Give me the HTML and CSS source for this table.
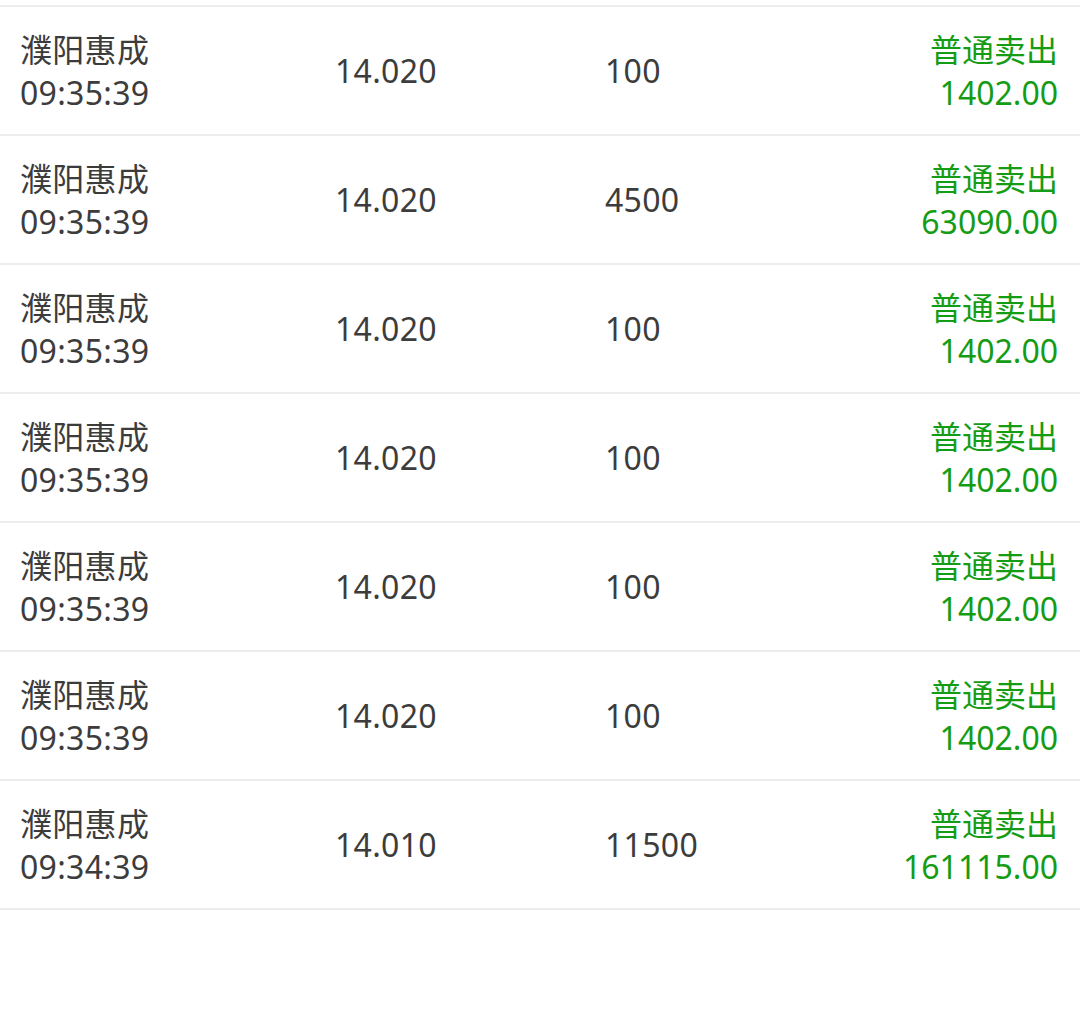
FILE: index.html
```html
<!DOCTYPE html>
<html lang="zh-CN">
<head>
<meta charset="utf-8">
<link rel="stylesheet" href="styles.css">
</head>
<body>
<div class="list">
  <div class="row">
    <div class="cell name"><div>濮阳惠成</div><div>09:35:39</div></div>
    <div class="cell">14.020</div>
    <div class="cell">100</div>
    <div class="cell side"><div>普通卖出</div><div>1402.00</div></div>
  </div>
  <div class="row">
    <div class="cell name"><div>濮阳惠成</div><div>09:35:39</div></div>
    <div class="cell">14.020</div>
    <div class="cell">4500</div>
    <div class="cell side"><div>普通卖出</div><div>63090.00</div></div>
  </div>
  <div class="row">
    <div class="cell name"><div>濮阳惠成</div><div>09:35:39</div></div>
    <div class="cell">14.020</div>
    <div class="cell">100</div>
    <div class="cell side"><div>普通卖出</div><div>1402.00</div></div>
  </div>
  <div class="row">
    <div class="cell name"><div>濮阳惠成</div><div>09:35:39</div></div>
    <div class="cell">14.020</div>
    <div class="cell">100</div>
    <div class="cell side"><div>普通卖出</div><div>1402.00</div></div>
  </div>
  <div class="row">
    <div class="cell name"><div>濮阳惠成</div><div>09:35:39</div></div>
    <div class="cell">14.020</div>
    <div class="cell">100</div>
    <div class="cell side"><div>普通卖出</div><div>1402.00</div></div>
  </div>
  <div class="row">
    <div class="cell name"><div>濮阳惠成</div><div>09:35:39</div></div>
    <div class="cell">14.020</div>
    <div class="cell">100</div>
    <div class="cell side"><div>普通卖出</div><div>1402.00</div></div>
  </div>
  <div class="row last">
    <div class="cell name"><div>濮阳惠成</div><div>09:34:39</div></div>
    <div class="cell">14.010</div>
    <div class="cell">11500</div>
    <div class="cell side"><div>普通卖出</div><div>161115.00</div></div>
  </div>
</div>
</body>
</html>
```
FILE: styles.css
```css
html, body {
  margin: 0;
  padding: 0;
  background: #ffffff;
}
body {
  width: 1080px;
  height: 1028px;
  overflow: hidden;
  font-family: "Noto Sans", "Noto Sans CJK SC", sans-serif;
  font-size: 32px;
  color: #3c3c3c;
}
.list {
  padding-top: 5px;
}
.row {
  height: 127px;
  border-top: 2px solid #ededed;
  display: grid;
  grid-template-columns: 315px 270px 1fr auto;
  align-items: center;
  padding: 0 22px 0 20px;
}
.row.last {
  border-bottom: 2px solid #ededed;
}
.cell {
  line-height: 43px;
  letter-spacing: 0.3px;
}
.side {
  text-align: right;
  color: #159c15;
  letter-spacing: 0;
}
```
